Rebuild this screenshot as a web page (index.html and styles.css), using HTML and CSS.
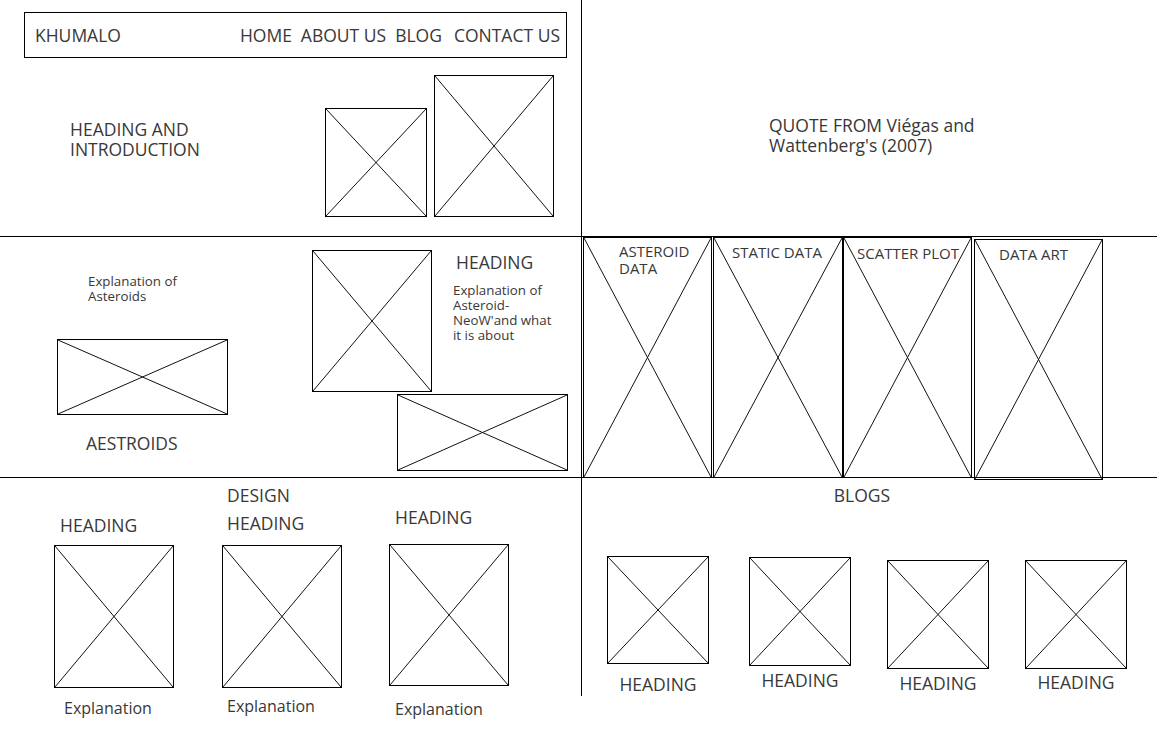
FILE: index.html
```html
<!DOCTYPE html>
<html lang="en">
<head>
    <meta charset="UTF-8">
    <meta name="viewport" content="width=device-width, initial-scale=1.0">
    <title>Khumalo - Wireframe</title>
    <link rel="stylesheet" href="styles.css">
</head>
<body>
<div class="board">

    <!-- Hero -->
    <section class="panel panel-hero">
        <nav class="topnav">
            <span class="brand">KHUMALO</span>
            <ul class="menu">
                <li>HOME</li>
                <li>ABOUT US</li>
                <li>BLOG</li>
                <li class="menu-contact">CONTACT US</li>
            </ul>
        </nav>
        <div class="hero-body">
            <h1 class="hero-title">HEADING AND<br>INTRODUCTION</h1>
            <div class="ph hero-img-sm"><svg class="x" viewBox="0 0 100 100" preserveAspectRatio="none"><line x1="0" y1="0" x2="100" y2="100"/><line x1="100" y1="0" x2="0" y2="100"/></svg></div>
            <div class="ph hero-img-lg"><svg class="x" viewBox="0 0 100 100" preserveAspectRatio="none"><line x1="0" y1="0" x2="100" y2="100"/><line x1="100" y1="0" x2="0" y2="100"/></svg></div>
        </div>
    </section>

    <!-- Quote -->
    <section class="panel panel-quote">
        <p class="quote">QUOTE FROM Viégas and<br>Wattenberg's (2007)</p>
    </section>

    <!-- Asteroids -->
    <section class="panel panel-asteroids">
        <div class="ast-left">
            <p class="small-text ast-intro">Explanation of<br>Asteroids</p>
            <div class="ph ast-wide"><svg class="x" viewBox="0 0 100 100" preserveAspectRatio="none"><line x1="0" y1="0" x2="100" y2="100"/><line x1="100" y1="0" x2="0" y2="100"/></svg></div>
            <h2 class="label ast-label">AESTROIDS</h2>
        </div>
        <div class="ast-right">
            <div class="ast-row">
                <div class="ph ast-tall"><svg class="x" viewBox="0 0 100 100" preserveAspectRatio="none"><line x1="0" y1="0" x2="100" y2="100"/><line x1="100" y1="0" x2="0" y2="100"/></svg></div>
                <div class="ast-text">
                    <h2 class="label ast-heading">HEADING</h2>
                    <p class="small-text">Explanation of<br>Asteroid-<br>NeoW'and what<br>it is about</p>
                </div>
            </div>
            <div class="ph ast-wide ast-wide-b"><svg class="x" viewBox="0 0 100 100" preserveAspectRatio="none"><line x1="0" y1="0" x2="100" y2="100"/><line x1="100" y1="0" x2="0" y2="100"/></svg></div>
        </div>
    </section>

    <!-- Data pages -->
    <section class="panel panel-data">
        <div class="ph data-card data-a"><svg class="x" viewBox="0 0 100 100" preserveAspectRatio="none"><line x1="0" y1="0" x2="100" y2="100"/><line x1="100" y1="0" x2="0" y2="100"/></svg><span class="data-label">ASTEROID<br>DATA</span></div>
        <div class="ph data-card data-b"><svg class="x" viewBox="0 0 100 100" preserveAspectRatio="none"><line x1="0" y1="0" x2="100" y2="100"/><line x1="100" y1="0" x2="0" y2="100"/></svg><span class="data-label">STATIC DATA</span></div>
        <div class="ph data-card data-c"><svg class="x" viewBox="0 0 100 100" preserveAspectRatio="none"><line x1="0" y1="0" x2="100" y2="100"/><line x1="100" y1="0" x2="0" y2="100"/></svg><span class="data-label">SCATTER PLOT</span></div>
        <div class="ph data-card data-d"><svg class="x" viewBox="0 0 100 100" preserveAspectRatio="none"><line x1="0" y1="0" x2="100" y2="100"/><line x1="100" y1="0" x2="0" y2="100"/></svg><span class="data-label">DATA ART</span></div>
    </section>

    <!-- Design features -->
    <section class="panel panel-features">
        <div class="feature feature-a">
            <h2 class="label">HEADING</h2>
            <div class="ph feature-img"><svg class="x" viewBox="0 0 100 100" preserveAspectRatio="none"><line x1="0" y1="0" x2="100" y2="100"/><line x1="100" y1="0" x2="0" y2="100"/></svg></div>
            <p class="feature-text">Explanation</p>
        </div>
        <div class="feature feature-b">
            <h2 class="label">DESIGN<br>HEADING</h2>
            <div class="ph feature-img"><svg class="x" viewBox="0 0 100 100" preserveAspectRatio="none"><line x1="0" y1="0" x2="100" y2="100"/><line x1="100" y1="0" x2="0" y2="100"/></svg></div>
            <p class="feature-text">Explanation</p>
        </div>
        <div class="feature feature-c">
            <h2 class="label">HEADING</h2>
            <div class="ph feature-img"><svg class="x" viewBox="0 0 100 100" preserveAspectRatio="none"><line x1="0" y1="0" x2="100" y2="100"/><line x1="100" y1="0" x2="0" y2="100"/></svg></div>
            <p class="feature-text">Explanation</p>
        </div>
    </section>

    <!-- Blogs -->
    <section class="panel panel-blogs">
        <h2 class="label blogs-title">BLOGS</h2>
        <div class="blog-row">
            <div class="blog blog-a">
                <div class="ph blog-img"><svg class="x" viewBox="0 0 100 100" preserveAspectRatio="none"><line x1="0" y1="0" x2="100" y2="100"/><line x1="100" y1="0" x2="0" y2="100"/></svg></div>
                <h3 class="label">HEADING</h3>
            </div>
            <div class="blog blog-b">
                <div class="ph blog-img"><svg class="x" viewBox="0 0 100 100" preserveAspectRatio="none"><line x1="0" y1="0" x2="100" y2="100"/><line x1="100" y1="0" x2="0" y2="100"/></svg></div>
                <h3 class="label">HEADING</h3>
            </div>
            <div class="blog blog-c">
                <div class="ph blog-img"><svg class="x" viewBox="0 0 100 100" preserveAspectRatio="none"><line x1="0" y1="0" x2="100" y2="100"/><line x1="100" y1="0" x2="0" y2="100"/></svg></div>
                <h3 class="label">HEADING</h3>
            </div>
            <div class="blog blog-d">
                <div class="ph blog-img"><svg class="x" viewBox="0 0 100 100" preserveAspectRatio="none"><line x1="0" y1="0" x2="100" y2="100"/><line x1="100" y1="0" x2="0" y2="100"/></svg></div>
                <h3 class="label">HEADING</h3>
            </div>
        </div>
    </section>

</div>
</body>
</html>
```

FILE: styles.css
```css
/* General */
* {
    box-sizing: border-box;
}

body {
    margin: 0;
    background: #fff;
    color: #383838;
    font-family: "Open Sans", "Liberation Sans", sans-serif;
}

h1, h2, h3, p, ul {
    margin: 0;
    padding: 0;
    font-weight: normal;
}

.label {
    font-size: 17.5px;
    line-height: 20px;
}

.small-text {
    font-size: 13.3px;
    line-height: 15px;
}

/* Board: 3 rows x 2 columns */
.board {
    display: grid;
    grid-template-columns: 582px 575px;
    grid-template-rows: 237px 241px auto;
    width: 1157px;
    min-height: 743px;
}

.panel-hero,
.panel-asteroids {
    border-right: 1px solid #000;
}

.panel-hero,
.panel-quote,
.panel-asteroids,
.panel-data {
    border-bottom: 1px solid #000;
}

/* Placeholder image (box with an X) */
.ph {
    position: relative;
    flex-shrink: 0;
    border: 1px solid #000;
}

.ph .x {
    position: absolute;
    top: 0;
    left: 0;
    width: 100%;
    height: 100%;
}

.ph .x line {
    stroke: #111;
    stroke-width: 1;
    vector-effect: non-scaling-stroke;
}

/* Hero */
.topnav {
    display: flex;
    align-items: center;
    justify-content: space-between;
    width: 543px;
    height: 46px;
    margin: 12px 0 0 24px;
    padding: 0 6px 0 10px;
    border: 1px solid #000;
    font-size: 17.5px;
    line-height: 20px;
}

.menu {
    display: flex;
    gap: 9px;
    list-style: none;
}

.menu .menu-contact {
    margin-left: 3px;
}

.hero-body {
    display: flex;
    align-items: flex-start;
    margin-top: 17px;
    padding-left: 70px;
}

.hero-title {
    width: 255px;
    margin-top: 44px;
    font-size: 17.5px;
    line-height: 20px;
}

.hero-img-sm {
    width: 102px;
    height: 109px;
    margin-top: 33px;
}

.hero-img-lg {
    width: 120px;
    height: 142px;
    margin-left: 7px;
}

/* Quote */
.panel-quote {
    padding: 115px 0 0 187px;
}

.quote {
    font-size: 17.5px;
    line-height: 20px;
}

/* Asteroids */
.panel-asteroids {
    display: flex;
    align-items: flex-start;
}

.ast-left {
    display: flex;
    flex-direction: column;
    margin-left: 57px;
}

.ast-intro {
    margin: 37px 0 0 31px;
}

.ast-wide {
    width: 171px;
    height: 76px;
    margin-top: 35px;
}

.ast-label {
    margin: 18px 0 0 29px;
}

.ast-right {
    margin: 13px 0 0 84px;
}

.ast-row {
    display: flex;
    align-items: flex-start;
}

.ast-tall {
    width: 120px;
    height: 142px;
}

.ast-text {
    margin-left: 21px;
}

.ast-heading {
    margin: 2px 0 11px 3px;
}

.ast-wide-b {
    height: 77px;
    margin: 2px 0 0 85px;
}

/* Data pages */
.panel-data {
    display: flex;
    align-items: flex-start;
    padding-left: 1px;
}

.data-card {
    width: 129px;
    height: 241px;
}

.data-label {
    position: relative;
    display: block;
    font-size: 15px;
    line-height: 17px;
}

.data-a .data-label { padding: 5px 0 0 35px; }

.data-b {
    width: 130px;
    margin-left: 1px;
}
.data-b .data-label { padding: 6px 0 0 18px; }

.data-c .data-label { padding: 7px 0 0 13px; }

.data-d {
    margin: 2px 0 0 2px;
}
.data-d .data-label { padding: 6px 0 0 24px; }

/* Design features */
.panel-features {
    display: flex;
    align-items: flex-start;
}

.feature {
    display: flex;
    flex-direction: column;
}

.feature-img {
    width: 120px;
    height: 143px;
}

.feature-text {
    font-size: 16px;
    line-height: 20px;
}

.feature-a {
    margin: 37px 0 0 54px;
}
.feature-a .label { margin: 0 0 10px 6px; }
.feature-a .feature-text { margin: 10px 0 0 10px; }

.feature-b {
    margin: 3px 0 0 48px;
}
.feature-b .label {
    margin: 0 0 8px 5px;
    line-height: 28px;
}
.feature-b .feature-text { margin: 8px 0 0 5px; }

.feature-c {
    margin: 29px 0 0 47px;
}
.feature-c .label { margin: 0 0 17px 6px; }
.feature-c .feature-img { height: 142px; }
.feature-c .feature-text { margin: 13px 0 0 6px; }

/* Blogs: its left border is the divider, which stops above the page bottom */
.panel-blogs {
    align-self: start;
    height: 218px;
    margin-left: -1px;
    border-left: 1px solid #000;
}

.blogs-title {
    margin-top: 7px;
    padding-right: 15px;
    text-align: center;
}

.blog-row {
    display: flex;
    align-items: flex-start;
    gap: 36px;
    margin-top: 51px;
    padding-left: 25px;
}

.blog {
    display: flex;
    flex-direction: column;
    align-items: center;
}

.blog-img {
    width: 102px;
    height: 109px;
}

.blog .label {
    margin-top: 4px;
}

.blog-a .blog-img { height: 108px; }
.blog-a .label { margin-top: 10px; }

.blog-b { margin: 1px 0 0 4px; }
.blog-c { margin-top: 4px; }
.blog-d { margin-top: 4px; }
.blog-d .label { margin-top: 3px; }
```
